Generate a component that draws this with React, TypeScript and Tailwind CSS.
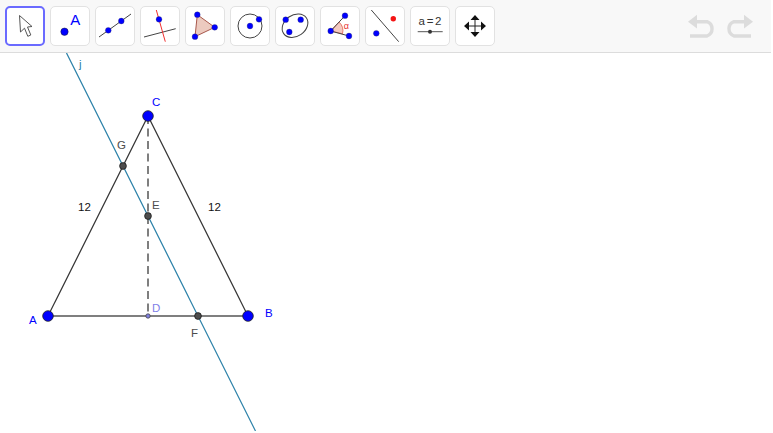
const BLUE = "#0000ff";

function ToolButton({ x, active, children }: { x: number; active?: boolean; children?: React.ReactNode }) {
  return (
    <div
      className={
        active
          ? "h-10 w-10 shrink-0 rounded-[5px] border-2 border-[#6a6aff] bg-white"
          : "h-10 w-10 shrink-0 rounded-[5px] border border-[#e2e2e2] bg-white"
      }
    >
      {/* viewBox uses page coordinates so icon points can be read off the picture */}
      <svg
        viewBox={`${x + (active ? 2 : 1)} ${6 + (active ? 2 : 1)} ${active ? 36 : 38} ${active ? 36 : 38}`}
        className="block h-full w-full"
      >
        {children}
      </svg>
    </div>
  );
}

function Dot({ x, y, r = 2.9, fill = BLUE }: { x: number; y: number; r?: number; fill?: string }) {
  return <circle cx={x} cy={y} r={r} fill={fill} stroke="#33334a" strokeWidth={0.3} />;
}

function Toolbar() {
  return (
    <div className="flex h-[53px] w-[771px] items-start gap-[5px] border-b border-[#dcdcdc] bg-[#f8f8f8] pl-[5px] pt-[6px]">
      <ToolButton x={5} active>
        <path
          d="M19.5 15.5 L20.5 32 L24.5 28.2 L27.8 36.3 L30.8 35 L27.5 27 L32 26.5 Z"
          fill="#fff"
          stroke="#555"
          strokeWidth={1}
          strokeLinejoin="round"
        />
      </ToolButton>
      <ToolButton x={50}>
        <circle cx={64.5} cy={31.7} r={3.7} fill={BLUE} stroke="#1a1a2a" strokeWidth={0.5} />
        <text x={70.3} y={25.2} fontSize={15} fill={BLUE} fontFamily="Liberation Sans, sans-serif">A</text>
      </ToolButton>
      <ToolButton x={95}>
        <line x1={99} y1={37} x2={131} y2={14} stroke="#444" strokeWidth={1} />
        <Dot x={108.3} y={30.3} />
        <Dot x={121.3} y={21} />
      </ToolButton>
      <ToolButton x={140}>
        <line x1={144} y1={37} x2={175.7} y2={28.7} stroke="#444" strokeWidth={1} />
        <line x1={156.3} y1={10} x2={165.3} y2={41.7} stroke="#f03030" strokeWidth={1} />
        <Dot x={159} y={19.3} />
      </ToolButton>
      <ToolButton x={185}>
        <polygon points="197.3,14.7 214.7,27.3 195,36.7" fill="#eccabf" stroke="#a8584c" strokeWidth={1} />
        <Dot x={197.3} y={14.7} />
        <Dot x={214.7} y={27.3} />
        <Dot x={195} y={36.7} />
      </ToolButton>
      <ToolButton x={230}>
        <circle cx={250} cy={26} r={12} fill="none" stroke="#444" strokeWidth={1} />
        <Dot x={250} y={26} />
        <Dot x={259} y={19.3} />
      </ToolButton>
      <ToolButton x={275}>
        <ellipse cx={295} cy={25.7} rx={13.8} ry={10.6} transform="rotate(-35 295 25.7)" fill="none" stroke="#444" strokeWidth={1} />
        <Dot x={285.7} y={19.7} />
        <Dot x={300.7} y={19.7} />
        <Dot x={289.3} y={32} />
      </ToolButton>
      <ToolButton x={320}>
        <path d="M330.7 31 L339 22 A12 12 0 0 1 342.5 33.8 Z" fill="#f3c9c0" stroke="#e04a3a" strokeWidth={0.7} />
        <line x1={330.7} y1={31} x2={345} y2={15.7} stroke="#444" strokeWidth={1} />
        <line x1={330.7} y1={31} x2={349} y2={36} stroke="#444" strokeWidth={1} />
        <Dot x={330.7} y={31} />
        <Dot x={345} y={15.7} />
        <Dot x={349} y={36} />
        <text x={343.8} y={29} fontSize={9} fill="#e83030" fontFamily="Liberation Sans, sans-serif">α</text>
      </ToolButton>
      <ToolButton x={365}>
        <line x1={371.3} y1={10} x2={398.7} y2={41.7} stroke="#444" strokeWidth={1} />
        <circle cx={393.3} cy={18.7} r={2.7} fill="#f41414" />
        <Dot x={376.3} y={33.3} />
      </ToolButton>
      <ToolButton x={410}>
        <text x={430} y={25.2} fontSize={11.5} wordSpacing={-1.5} textAnchor="middle" fill="#333" fontFamily="Liberation Sans, sans-serif">a = 2</text>
        <line x1={417.7} y1={31.7} x2={442.7} y2={31.7} stroke="#555" strokeWidth={1} />
        <circle cx={430} cy={31.7} r={2} fill="#333" />
      </ToolButton>
      <ToolButton x={455}>
        <path d="M475 18 V34 M467 26 H483" stroke="#222" strokeWidth={1} fill="none" />
        <path
          d="M475 15 L479.5 20 H470.5 Z M475 37 L479.5 32 H470.5 Z M464 26 L469 21.5 V30.5 Z M486 26 L481 21.5 V30.5 Z"
          fill="#111"
        />
      </ToolButton>
      <div className="ml-auto mr-[15px] mt-[8px] flex">
        <svg viewBox="686 14 70 26" className="h-[26px] w-[70px]">
          <path d="M694 21.7 H707 A7.6 7.6 0 0 1 707 36 H690" fill="none" stroke="#dcdcdc" strokeWidth={3.4} />
          <path d="M688 21.7 L697 14.8 V28.6 Z" fill="#dcdcdc" />
          <path d="M747 21.7 H734 A7.6 7.6 0 0 0 734 36 H751" fill="none" stroke="#dcdcdc" strokeWidth={3.4} />
          <path d="M753 21.7 L744 14.8 V28.6 Z" fill="#dcdcdc" />
        </svg>
      </div>
    </div>
  );
}

function Label({ x, y, fill, children }: { x: number; y: number; fill: string; children: React.ReactNode }) {
  return (
    <text x={x} y={y} fill={fill} fontSize={11.5} fontFamily="Liberation Sans, sans-serif">
      {children}
    </text>
  );
}

function Construction() {
  return (
    <svg viewBox="0 53 773 378" className="block h-[378px] w-[773px] bg-white">
      <line x1={66.5} y1={53} x2={255.5} y2={431} stroke="#2a80a8" strokeWidth={1.2} />
      <line x1={48} y1={316} x2={248} y2={316} stroke="#7f7f7f" strokeWidth={2} />
      <line x1={48} y1={316} x2={148} y2={116} stroke="#333" strokeWidth={1.2} />
      <line x1={248} y1={316} x2={148} y2={116} stroke="#333" strokeWidth={1.2} />
      <line x1={148} y1={116} x2={148} y2={316} stroke="#7f7f7f" strokeWidth={2} strokeDasharray="8 4.5" />

      <circle cx={148} cy={316} r={2.2} fill="#8080e0" stroke="#444" strokeWidth={0.8} />
      <circle cx={148} cy={216} r={3.4} fill="#4d4d4d" stroke="#111" strokeWidth={0.7} />
      <circle cx={198} cy={316} r={3.4} fill="#4d4d4d" stroke="#111" strokeWidth={0.7} />
      <circle cx={123} cy={166} r={3.4} fill="#4d4d4d" stroke="#111" strokeWidth={0.7} />
      <circle cx={48} cy={316} r={5.3} fill={BLUE} stroke="#222" strokeWidth={0.8} />
      <circle cx={248} cy={316} r={5.3} fill={BLUE} stroke="#222" strokeWidth={0.8} />
      <circle cx={148} cy={116} r={5.3} fill={BLUE} stroke="#222" strokeWidth={0.8} />

      <Label x={79} y={68} fill="#2a80a8">j</Label>
      <Label x={152} y={106} fill={BLUE}>C</Label>
      <Label x={117} y={149} fill="#4d4d4d">G</Label>
      <Label x={152} y={209} fill="#4d4d4d">E</Label>
      <Label x={152} y={312} fill="#8080e8">D</Label>
      <Label x={191} y={337} fill="#4d4d4d">F</Label>
      <Label x={265} y={317} fill={BLUE}>B</Label>
      <Label x={29} y={324} fill={BLUE}>A</Label>
      <Label x={78} y={211} fill="#111">12</Label>
      <Label x={208} y={211} fill="#111">12</Label>
    </svg>
  );
}

export default function App() {
  return (
    <div className="h-[433px] w-[773px] overflow-hidden bg-white">
      <Toolbar />
      <Construction />
    </div>
  );
}
